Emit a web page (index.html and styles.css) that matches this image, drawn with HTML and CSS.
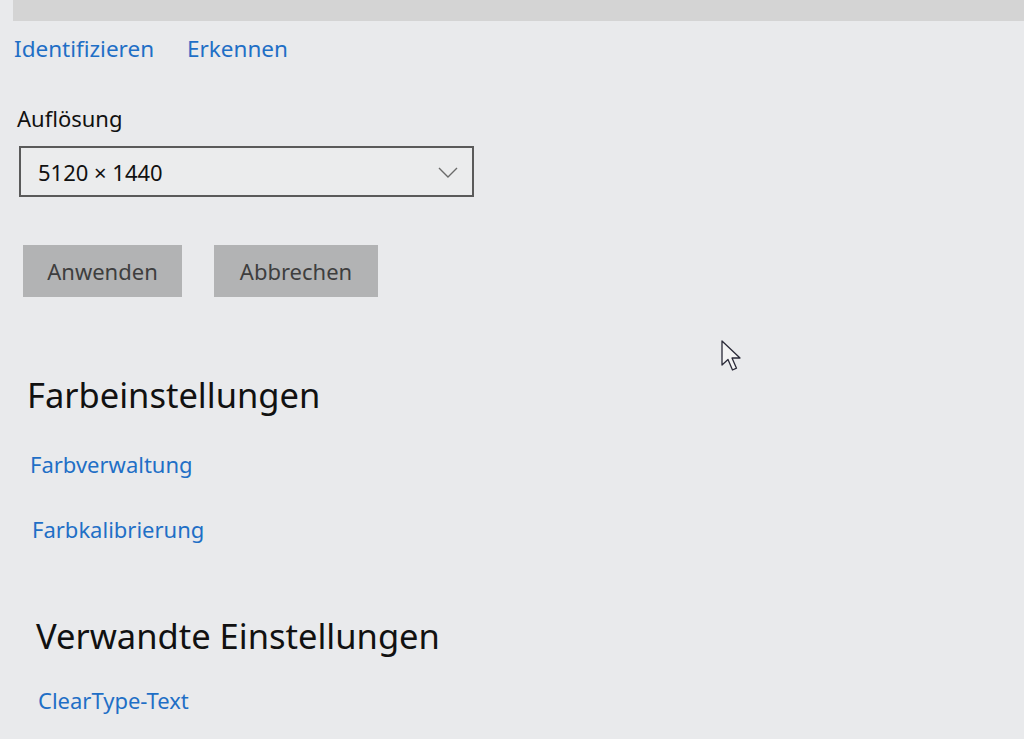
FILE: index.html
```html
<!DOCTYPE html>
<html lang="de">
<head>
    <meta charset="UTF-8">
    <title>Anzeige</title>
    <link rel="stylesheet" href="styles.css">
</head>
<body>
    <div class="topbar"></div>

    <div class="page">
        <div class="links">
            <a href="#">Identifizieren</a>
            <a href="#">Erkennen</a>
        </div>

        <div class="label">Auflösung</div>
        <div class="select">
            <span>5120 × 1440</span>
            <svg class="chevron" width="20" height="12" viewBox="0 0 20 12">
                <polyline points="1,1 10,10 19,1" fill="none" stroke="#6a6a6a" stroke-width="1.4"/>
            </svg>
        </div>

        <div class="buttons">
            <button class="btn btn-apply">Anwenden</button>
            <button class="btn btn-cancel">Abbrechen</button>
        </div>

        <h2 class="section first">Farbeinstellungen</h2>
        <a class="link link-a" href="#">Farbverwaltung</a>
        <a class="link link-b" href="#">Farbkalibrierung</a>

        <h2 class="section second">Verwandte Einstellungen</h2>
        <a class="link link-c" href="#">ClearType-Text</a>
    </div>

    <!-- Mauszeiger -->
    <svg class="cursor" width="24" height="34" viewBox="0 0 24 34">
        <path d="M2 2 L2 26 L8 20.5 L12.5 31 L16.5 29.2 L12 19 L20 19 Z" fill="#f4f4f4" stroke="#2a2a38" stroke-width="1.3" stroke-linejoin="round"/>
    </svg>
</body>
</html>
```

FILE: styles.css
```css
body {
    margin: 0;
    padding: 0;
    background: #e9eaec;
    font-family: "Noto Sans", "Open Sans", sans-serif;
    color: #1a1a1a;
    overflow: hidden;
    height: 739px;
    position: relative;
}
.topbar {
    height: 21px;
    margin-left: 13px;
    background: #d4d4d4;
}
.page {
    display: flex;
    flex-direction: column;
    align-items: flex-start;
}
.links {
    display: flex;
    gap: 33px;
    margin: 14px 0 0 14px;
    font-size: 22.5px;
    line-height: 28px;
}
.links a, .link {
    color: #1f6fc6;
    text-decoration: none;
}
.label {
    margin: 42px 0 0 17px;
    font-size: 22px;
    line-height: 26px;
    color: #111;
}
.select {
    box-sizing: border-box;
    width: 455px;
    height: 51px;
    margin: 15px 0 0 19px;
    border: 2px solid #5a5a5a;
    background: #ebeced;
    display: flex;
    align-items: center;
    justify-content: space-between;
    padding: 0 14px 0 17px;
    font-size: 22px;
    color: #111;
}
.chevron {
    margin-top: 2px;
}
.buttons {
    display: flex;
    gap: 32px;
    margin: 48px 0 0 23px;
}
.btn {
    height: 52px;
    border: none;
    background: #b2b3b4;
    color: #3e3e3e;
    font-family: inherit;
    font-size: 22px;
    padding: 0;
}
.btn-apply {
    width: 159px;
}
.btn-cancel {
    width: 164px;
}
.section {
    margin: 0;
    font-weight: normal;
    font-size: 34.5px;
    line-height: 44px;
    color: #111;
}
.section.first {
    margin: 76px 0 0 27px;
}
.section.second {
    margin: 71px 0 0 36px;
}
.link {
    font-size: 22px;
    line-height: 28px;
}
.link-a {
    margin: 33px 0 0 30px;
}
.link-b {
    margin: 37px 0 0 32px;
}
.link-c {
    margin: 28px 0 0 38px;
}
.cursor {
    position: absolute;
    left: 720px;
    top: 339px;
}
```
